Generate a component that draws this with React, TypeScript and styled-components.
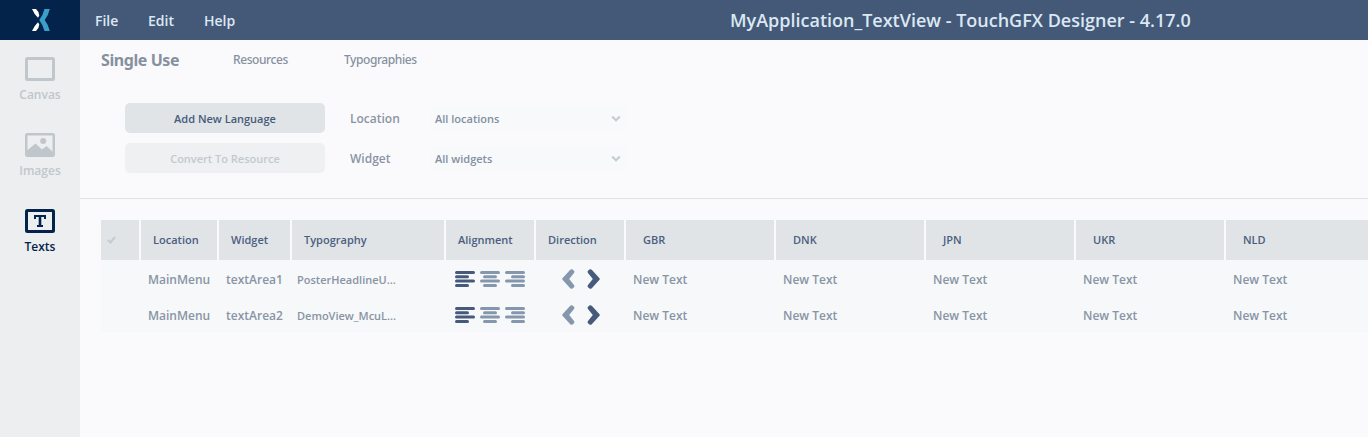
import React from "react";
import styled, { createGlobalStyle } from "styled-components";

const Global = createGlobalStyle`
  * { box-sizing: border-box; }
  body { margin: 0; background: #fafafc; font-family: "Open Sans", "Noto Sans", sans-serif; font-weight: 600; }
`;

const Page = styled.div`
  display: flex;
  flex-direction: column;
  width: 100%;
  height: 437px;
  overflow: hidden;
`;
const TopBar = styled.header`
  display: flex;
  height: 40px;
  flex: none;
  background: #445977;
  color: #dbe8f4;
`;
const Logo = styled.div`
  width: 80px;
  display: flex;
  align-items: center;
  justify-content: center;
  padding-left: 2px;
  background: #03234b;
`;
const Menu = styled.nav`
  display: flex;
  align-items: center;
  width: 650px;
  padding-left: 15px;
`;
const MenuItem = styled.span<{ $w: number }>`
  width: ${(p) => p.$w}px;
  font-size: 14px;
  line-height: 20px;
  padding-top: 2px;
  white-space: nowrap;
`;
const Title = styled.h1`
  margin: 0;
  font-size: 18px;
  font-weight: 600;
  line-height: 41px;
  white-space: nowrap;
`;
const Body = styled.div`
  display: flex;
  flex: 1;
  min-height: 0;
`;
const Sidebar = styled.aside`
  width: 80px;
  flex: none;
  background: #eceef0;
  padding-top: 17px;
`;
const SideItem = styled.div<{ $active?: boolean }>`
  height: 76px;
  display: flex;
  flex-direction: column;
  align-items: center;
  color: ${(p) => (p.$active ? "#03234b" : "#c0c7cc")};
`;
const SideLabel = styled.span`
  font-size: 12px;
  line-height: 18px;
  margin-top: 5px;
`;
const Main = styled.main`
  flex: 1;
  min-width: 0;
  overflow: hidden;
`;
const Tabs = styled.div`
  display: flex;
  align-items: center;
  height: 39px;
  padding-left: 21px;
  color: #86909f;
`;
const Tab = styled.span<{ $w: number; $active?: boolean }>`
  width: ${(p) => p.$w}px;
  white-space: nowrap;
  font-family: "Noto Sans", "Open Sans", sans-serif;
  font-weight: ${(p) => (p.$active ? 700 : 500)};
  font-size: ${(p) => (p.$active ? 16 : 12)}px;
  letter-spacing: ${(p) => (p.$active ? -0.42 : -0.42)}px;
`;
const Controls = styled.section`
  height: 120px;
  padding: 24px 0 0 45px;
  display: grid;
  grid-template-columns: 200px 82px 198px;
  grid-template-rows: 30px 30px;
  row-gap: 10px;
  column-gap: 0;
  border-bottom: 1px solid #dfe2e5;
`;
const Button = styled.button<{ $off?: boolean }>`
  border: 0;
  border-radius: 5px;
  padding: 0;
  font: inherit;
  font-size: 11px;
  background: ${(p) => (p.$off ? "#eef0f2" : "#e0e4e6")};
  color: ${(p) => (p.$off ? "#c3c9ce" : "#465a7c")};
`;
const FieldLabel = styled.label`
  padding: 1px 0 0 25px;
  width: 105px;
  font-size: 12px;
  line-height: 30px;
  color: #8b94a3;
`;
const Select = styled.div`
  height: 24px;
  margin: 3px 0 0 23px;
  width: 197px;
  padding: 1px 6px 0 5px;
  display: flex;
  align-items: center;
  justify-content: space-between;
  background: #f7f9fa;
  border-radius: 3px;
  font-size: 11px;
  color: #8390a2;
`;
const Table = styled.section`
  margin: 21px 0 0 21px;
  width: 1400px;
`;
const Row = styled.div<{ $head?: boolean }>`
  display: grid;
  grid-template-columns: 38px 76px 71px 152px 88px 88px repeat(5, 148px);
  column-gap: 2px;
  height: ${(p) => (p.$head ? 40 : 36)}px;
  background: ${(p) => (p.$head ? "transparent" : "#f6f8fa")};
`;
const HeadCell = styled.div<{ $pad?: number }>`
  display: flex;
  align-items: center;
  padding-left: ${(p) => p.$pad ?? 12}px;
  padding-bottom: 1px;
  background: #e0e4e6;
  color: #4b5e80;
  font-size: 11px;
`;
const Cell = styled.div<{ $size?: number; $gap?: number; $pad?: number }>`
  display: flex;
  align-items: center;
  gap: ${(p) => p.$gap ?? 0}px;
  padding-left: ${(p) => p.$pad ?? 7}px;
  padding-top: 2px;
  color: #8994a4;
  font-size: ${(p) => p.$size ?? 12}px;
  white-space: nowrap;
`;
const Icon = styled.svg`
  display: block;
  flex: none;
`;

const Chevron = () => (
  <Icon width="10" height="8" viewBox="0 0 10 8" fill="none" stroke="#c5cbd0" strokeWidth="2">
    <path d="M1.2 1.5 5 5.3l3.8-3.8" />
  </Icon>
);

const AlignIcon = ({ kind }: { kind: "left" | "center" | "right" }) => {
  const widths = [20, 14, 20, 14];
  return (
    <Icon width="20" height="16" fill={kind === "left" ? "#465a7c" : "#8597ad"}>
      {widths.map((w, i) => (
        <rect
          key={i}
          x={kind === "left" ? 0 : kind === "center" ? (20 - w) / 2 : 20 - w}
          y={[0, 4.3, 8.6, 12.9][i]}
          width={w}
          height="3"
          rx="1.5"
        />
      ))}
    </Icon>
  );
};

const Arrow = ({ next }: { next?: boolean }) => (
  <Icon width="13" height="20" viewBox="0 0 13 20" fill={next ? "#465a7c" : "#8597ad"}>
    <path
      transform={next ? "translate(13 0) scale(-1 1)" : undefined}
      d="M.5 9.2 8 1Q9-.1 10.200.2L12 1.700Q12.800 2.600 12 4L7.200 10 12 16Q12.800 17.400 12 18.300L10.200 19.800Q9 20.100 8 19L.5 10.800Q0 10 .5 9.200Z"
    />
  </Icon>
);

const heads = ["Location", "Widget", "Typography", "Alignment", "Direction"];
const languages = ["GBR", "DNK", "JPN", "UKR", "NLD"];
const rows = [
  { widget: "textArea1", typography: "PosterHeadlineU..." },
  { widget: "textArea2", typography: "DemoView_McuL..." },
];

export default function App() {
  return (
    <Page>
      <Global />
      <TopBar>
        <Logo>
          <Icon width="18" height="22" viewBox="0 0 18 22">
            <path fill="#fff" d="M0 0h4q3 2.500 3.300 6.500L6 8.800Q2 5 0 0ZM0 22h4q3-2.500 3.300-6.500L6 13.200Q2 17 0 22Z" />
            <path fill="#3a9fca" d="M17.800 0h-5.300Q11 6 7.300 11 11 16 12.500 22h5.300Q16.500 16 12.700 11 16.500 6 17.800 0Z" />
          </Icon>
        </Logo>
        <Menu>
          <MenuItem $w={53}>File</MenuItem>
          <MenuItem $w={56}>Edit</MenuItem>
          <MenuItem $w={60}>Help</MenuItem>
        </Menu>
        <Title>MyApplication_TextView - TouchGFX Designer - 4.17.0</Title>
      </TopBar>
      <Body>
        <Sidebar>
          <SideItem>
            <Icon width="30" height="24">
              <rect x="1.500" y="1.500" width="27" height="21" rx="1" fill="none" stroke="currentColor" strokeWidth="3" />
            </Icon>
            <SideLabel>Canvas</SideLabel>
          </SideItem>
          <SideItem>
            <Icon width="30" height="24" fill="currentColor">
              <rect x="1.250" y="1.250" width="27.500" height="21.500" rx="1" fill="none" stroke="currentColor" strokeWidth="2.500" />
              <circle cx="18.200" cy="8" r="3" />
              <path d="M2 22v-4.500L10.500 10.500l6.500 6 4.500-3.500L28 19v3Z" />
            </Icon>
            <SideLabel>Images</SideLabel>
          </SideItem>
          <SideItem $active>
            <Icon width="30" height="24" fill="none" stroke="currentColor">
              <rect x="1.500" y="1.500" width="27" height="21" rx="1" strokeWidth="3" />
              <path d="M10 10V7h10v3M12 17h6" strokeWidth="2" />
              <path d="M15 7v10" strokeWidth="2.600" />
            </Icon>
            <SideLabel>Texts</SideLabel>
          </SideItem>
        </Sidebar>
        <Main>
          <Tabs>
            <Tab $w={132} $active>Single Use</Tab>
            <Tab $w={111}>Resources</Tab>
            <Tab $w={90}>Typographies</Tab>
          </Tabs>
          <Controls>
            <Button>Add New Language</Button>
            <FieldLabel>Location</FieldLabel>
            <Select>All locations<Chevron /></Select>
            <Button $off>Convert To Resource</Button>
            <FieldLabel>Widget</FieldLabel>
            <Select>All widgets<Chevron /></Select>
          </Controls>
          <Table>
            <Row $head>
              <HeadCell $pad={6}>
                <Icon width="9" height="8" fill="none" stroke="#c5cbd0" strokeWidth="2">
                  <path d="M.8 4 3.500 6.500 8 1" />
                </Icon>
              </HeadCell>
              {heads.map((h) => <HeadCell key={h}>{h}</HeadCell>)}
              {languages.map((l) => <HeadCell key={l} $pad={17}>{l}</HeadCell>)}
            </Row>
            {rows.map((r) => (
              <Row key={r.widget}>
                <Cell />
                <Cell>{"MainMenu"}</Cell>
                <Cell>{r.widget}</Cell>
                <Cell $size={11} $pad={5}>{r.typography}</Cell>
                <Cell $gap={5} $pad={9}>
                  <AlignIcon kind="left" />
                  <AlignIcon kind="center" />
                  <AlignIcon kind="right" />
                </Cell>
                <Cell $gap={12} $pad={26}>
                  <Arrow />
                  <Arrow next />
                </Cell>
                {languages.map((l) => <Cell key={l}>New Text</Cell>)}
              </Row>
            ))}
          </Table>
        </Main>
      </Body>
    </Page>
  );
}
